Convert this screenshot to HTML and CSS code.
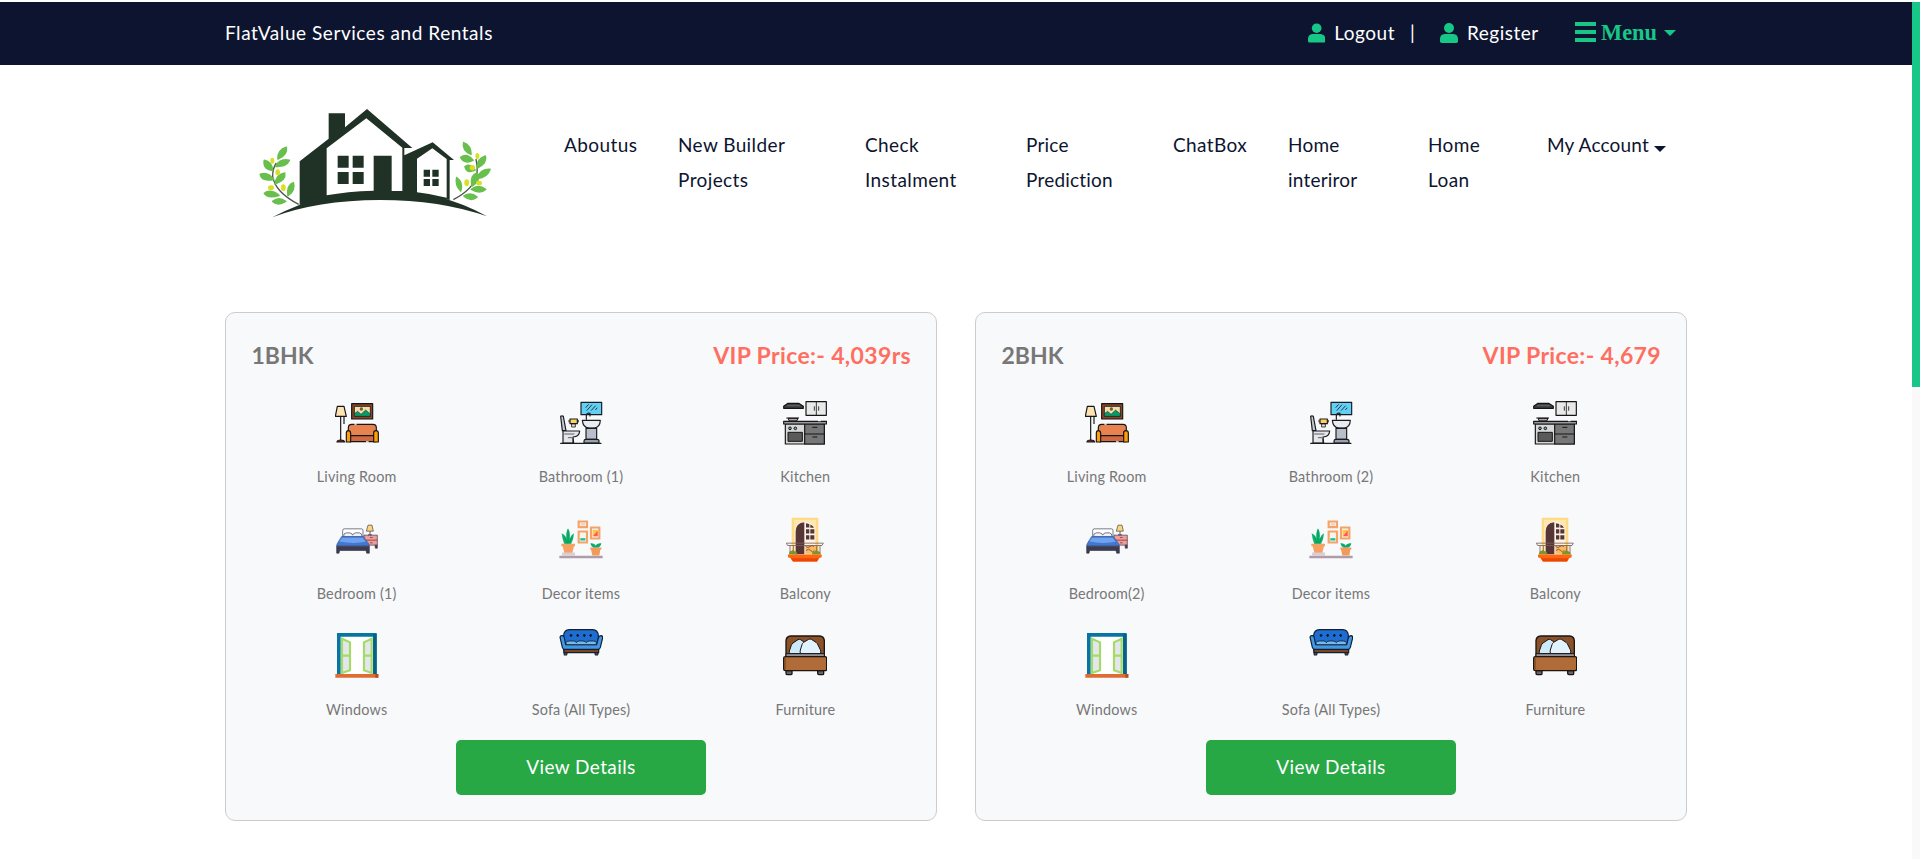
FILE: index.html
```html
<!DOCTYPE html>
<html lang="en">
<head>
<meta charset="utf-8">
<title>FlatValue Services and Rentals</title>
<link rel="stylesheet" href="styles.css">
</head>
<body>
<svg class="sprite" width="0" height="0" aria-hidden="true">
  <symbol id="user" viewBox="0 0 18 20">
    <circle cx="9" cy="5" r="5"/>
    <path d="M4.6 11h8.8Q18 11.500 18 16v2.200Q18 20 16.200 20H1.800Q0 20 0 18.200V16q0-4.500 4.600-5z"/>
  </symbol>

  <symbol id="living" viewBox="344 273 132 150">
    <g stroke="#161616" stroke-width="3.500" stroke-linejoin="round">
      <path d="M361 335v72M371 335v22" fill="none"/>
      <path d="M351 304h20l7 30h-33z" fill="#ffe3b3"/>
      <path d="M350 411q0-6 11-6t12 6z" fill="#8d2430"/>
      <path d="M394 296h63v46h-63z" fill="#8a4526"/>
      <path d="M402 304h48v30h-48z" fill="#f3dfaa" stroke-width="2.500"/>
      <path d="M402 334v-8l10-7 10 9 14-13 14 12v7z" fill="#079b6c" stroke-width="1.500"/>
      <circle cx="423" cy="312" r="5" fill="#6c6133" stroke="none"/>
      <path d="M384 382v-14q0-10 10-10h64q10 0 10 10v14l-4 10h-76z" fill="#e8824f"/>
      <path d="M388 392h78v18h-78z" fill="#cf6a41"/>
      <path d="M378 411v-27q0-7 6-7t7 7v27zM460 411v-27q0-7 7-7t7 7v27z" fill="#ff9e0b"/>
    </g>
    <path d="M402 357h7M437 411h8" stroke="#f8f9fb" stroke-width="4"/>
  </symbol>

  <symbol id="bathroom" viewBox="87 273 132 150">
    <g stroke="#1a1c20" stroke-width="3.500" stroke-linejoin="round" stroke-linecap="round">
      <path d="M153 292h62v37h-62z" fill="#62d0f4"/>
      <path d="M168 307l7-8M171 316l14-16M184 316l12-13M197 314l4-5" fill="none" stroke-width="2.500"/>
      <path d="M92 334q4-3 8 0l8 43H97z" fill="#c5c9d2"/>
      <path d="M99 378h50q-1 17-20 18l2 18h-32z" fill="#e3e6ea"/>
      <path d="M104 387h28" stroke-width="2" fill="none"/>
      <path d="M125 398h-10M128 401v13" stroke-width="2" fill="none"/>
      <path d="M120 342h22v14h-22z" fill="#ffd35a"/>
      <path d="M117 346v5M145 346v5M126 357h10v9h-10z" fill="#e8e8e8" stroke-width="2.500"/>
      <path d="M157 346h54q-1 22-18 23h-17q-17-1-19-23z" fill="#e8ebef"/>
      <path d="M168 370h32v33h-32z" fill="#b8beca"/>
      <path d="M162 414v-6q0-5 6-5h32q7 0 7 5v6z" fill="#9aa0ad"/>
      <path d="M169 343v-11q1-10 11-7v8" fill="none"/>
      <path d="M92 415h121" fill="none"/>
    </g>
  </symbol>

  <symbol id="kitchen" viewBox="761 273 132 150">
    <g stroke="#161616" stroke-width="3.500" stroke-linejoin="round">
      <path d="M776 295h32l14 9v6h-59v-6z" fill="#3f3f40"/>
      <path d="M773 302h39" fill="none" stroke="#777" stroke-width="2"/>
      <path d="M830 290h61v41h-61z" fill="#e9e9e9"/>
      <path d="M861 290v41M855 304v13M868 304v13" fill="none" stroke-width="2.500"/>
      <path d="M776 340h30l-4 8h-22zM771 339h38" fill="#aaa" stroke-width="3"/>
      <path d="M768 357h117v60H768z" fill="#d7d7d7"/>
      <path d="M826 357h59v60h-59z" fill="#777"/>
      <path d="M763 349h129v8H763z" fill="#9a9a9a"/>
      <path d="M826 387h59M849 367h15M849 396h15" fill="none" stroke-width="3"/>
      <path d="M776 382h43v27h-43z" fill="#5a5a5a" stroke-width="3"/>
      <circle cx="782" cy="370" r="4" fill="#6db2bd" stroke-width="3"/>
      <circle cx="798" cy="370" r="4" fill="#6db2bd" stroke-width="3"/>
    </g>
    <path d="M866 347h8" stroke="#f8f9fb" stroke-width="4"/>
  </symbol>

  <symbol id="bedroom" viewBox="104 37.500 132 150">
    <g stroke="#3c3b50" stroke-width="2" stroke-linejoin="round">
      <path d="M191 104h40v30h-40z" fill="#f59a94"/>
      <path d="M191 119h40M209 111h8M209 127h8" fill="none"/>
      <path d="M224 134h7v9h-6z" fill="#3c3b50"/>
      <path d="M209 92v11M203 103h12" fill="none" stroke-width="2.500"/>
      <path d="M203 74h12l4 18h-21z" fill="#ffd57b"/>
      <path d="M127 110V90q0-5 5-5h51q5 0 5 5v20z" fill="#fff"/>
      <path d="M130 109q-2-11 8-12h10q8 1 9 7 2-6 9-7h11q9 1 8 12z" fill="#eef1f7"/>
      <path d="M124 108h65l15 20q3 4 3 9H109q0-6 3-10z" fill="#4478d0" stroke="#3a5d9e"/>
      <path d="M109 137h98v21h-8l-2-8h-79l-2 8h-7z" fill="#3c3b50"/>
    </g>
    <path d="M125 112h62l9 12q-38 7-79-1z" fill="#70a3ef"/>
  </symbol>

  <symbol id="decor" viewBox="777 37.500 132 150">
    <g fill="#f7f4ee" stroke="#f4a468" stroke-width="6.500">
      <path d="M836 63h25v17h-25zM836 93h25v33h-25zM873 81h25v33h-25z"/>
    </g>
    <path d="M842 68h13v7h-13z" fill="#ecd3c6"/>
    <path d="M841 113h15v7h-15z" fill="#19c092"/>
    <path d="M878 88h15v19h-15z" fill="#ffc44b"/>
    <path d="M879 107l14-17v17z" fill="#ff594f"/>
    <path d="M778 166h130v7H778z" fill="#ae9ca9"/>
    <path d="M786 156h39v10h-39z" fill="#d8ced7"/>
    <path d="M785 98q14 8 14 17-2-20 5-32 8 14 5 31 4-12 13-16-1 18-9 33h-20q-6-14-8-33z" fill="#10b56d"/>
    <path d="M804 88v40M792 107l9 21M816 108l-8 20" fill="none" stroke="#078b55" stroke-width="2"/>
    <path d="M784 130h41v7h-3l-5 20h-24l-5-20h-4z" fill="#f6a263"/>
    <path d="M871 128q13-1 16 8 3-9 17-8-2 11-11 14h-12q-8-4-10-14z" fill="#08ad6b"/>
    <path d="M871 141h33v6h-3l-3 18h-21l-4-18h-2z" fill="#f29a5b"/>
  </symbol>

  <symbol id="balcony" viewBox="431 37.500 132 150">
    <path d="M457 52h80v109h-80z" fill="#ffd985"/>
    <path d="M464 58h66v98h-66z" fill="#ffe8ae"/>
    <path d="M468 161V93q0-29 28-30 28 1 31 30v68z" fill="#fff3e4"/>
    <path d="M469 161V94q0-27 26-29v96z" fill="#563538"/>
    <path d="M500 68q9 1 10 3v10h-10zM513 72q9 4 11 10h-11zM500 86h10v13h-10zM513 86h12v13h-12zM500 104h10v13h-10zM513 104h12v13h-12z" fill="#563538"/>
    <path d="M498 135h39v25h-39z" fill="#f7bc63"/>
    <path d="M499 138q7 6 13 0t12 0M500 150q8-8 14 0t11 0" fill="none" stroke="#915a3a" stroke-width="3"/>
    <path d="M441 128h111l-4 7H445zM452 135v22M542 135v22M462 135v22M532 135v22" fill="none" stroke="#7d5d58" stroke-width="2.500"/>
    <path d="M449 162q0-11 8-11 4-5 9 1 8 0 8 10zM518 162q0-10 8-10 5-6 10 0 8 0 9 10z" fill="#7d942c"/>
    <path d="M446 162h101v8l-8 3-6 10h-72l-7-10-8-3z" fill="#ff6610"/>
    <path d="M454 173h85l-6 10h-72z" fill="#eb4706"/>
  </symbol>

  <symbol id="windows" viewBox="104 387 132 150">
    <path d="M110 399h119v124H110z" fill="#0874a3"/>
    <path d="M121 410h97v113h-97z" fill="#fff"/>
    <path d="M219 402h10v120h-10z" fill="#086087"/>
    <g fill="#e5e6ed" stroke="#a3dc62" stroke-width="6.500">
      <path d="M125 416l24 11v84l-24 8zM214 416l-23 11v84l23 8z"/>
      <path d="M125 467h25M190 467h24" fill="none"/>
    </g>
    <path d="M105 522h129v11H105z" fill="#df6b36"/>
    <path d="M225 522h9v11h-9z" fill="#b74b24"/>
  </symbol>

  <symbol id="sofa" viewBox="777 387 132 150">
    <g stroke="#102037" stroke-width="3.500" stroke-linejoin="round">
      <path d="M791 448h12l-3 17h-7zM883 448h13l-3 17h-7z" fill="#8a5025"/>
      <path d="M792 446h104v12H792z" fill="#7b451e"/>
      <path d="M791 430v-24q1-16 17-17h70q16 1 17 17v24z" fill="#1d6ed0"/>
      <path d="M780 411q1-5 8-4 4 1 5 7l4 20h93l5-20q2-7 8-7 6 1 5 7l-7 28q-1 6-8 6h-98q-7 0-8-6z" fill="#4198e7"/>
      <path d="M798 434v-6q2-5 11-5h12q8 1 8 5 2-5 10-5h10q8 1 10 5 2-5 10-5h11q9 1 9 5v6z" fill="#78b9e9" stroke-width="2.500"/>
    </g>
    <path d="M813 402v9M833 402v9M853 402v9M872 402v9M809 406h8M829 406h8M849 406h8M868 406h8" stroke="#0a1830" stroke-width="4"/>
  </symbol>

  <symbol id="furniture" viewBox="431 387 132 150">
    <g stroke="#1c1512" stroke-width="4" stroke-linejoin="round">
      <path d="M440 512h18v9q0 3-4 3h-11q-3 0-3-4zM535 512h18v9q0 3-4 3h-10q-4 0-4-4z" fill="#686563"/>
      <path d="M440 468v-46q1-13 14-14h87q13 1 14 14v46z" fill="#8b5229"/>
      <g stroke-width="3">
        <path d="M451 461q-2-4-1-8l6-17q1-4 5-7l15-10q4-2 8 0l14 10v32z" fill="#cdeafa"/>
        <path d="M484 461q-3-5-1-11l5-16q1-4 5-7l15-9q4-2 8 0l14 9q4 3 6 8l7 14q3 7 0 12z" fill="#e0f3ff"/>
      </g>
      <path d="M440 461h115v9H440z" fill="#93939a" stroke-width="3"/>
      <path d="M433 475q0-5 5-5h119q5 0 5 5v32q0 5-5 5H438q-5 0-5-5z" fill="#b06c38"/>
    </g>
    <path d="M437 474v33" stroke="#855028" stroke-width="5"/>
  </symbol>
</svg>

<div class="page">
  <div class="content">
    <header class="topbar">
      <div class="wrap topbar-row">
        <span class="brand">FlatValue Services and Rentals</span>
        <div class="account">
          <a class="link"><svg class="user-icon"><use href="#user"/></svg>Logout</a>
          <span class="divider">|</span>
          <a class="link register"><svg class="user-icon"><use href="#user"/></svg>Register</a>
          <a class="menu"><span class="bars"><i></i><i></i><i></i></span>Menu<span class="caret"></span></a>
        </div>
      </div>
    </header>

    <div class="wrap mainnav">
      <svg class="logo" viewBox="0 0 810 420" role="img" aria-label="House logo">
        <g fill="#203126">
          <path d="M97 382Q250 300 425 300 600 300 741 379 600 330 420 330 230 331 97 382z"/>
          <path d="M179 345V214l87-68V70h49v42l66-55 136 117h-24v22l85-39 64 53h-13v120Q420 300 179 345z"/>
        </g>
        <path d="M260 175L379 85l108 88v130h-32V197h-54v105Q320 304 260 316z" fill="#fff"/>
        <path d="M531 206l46-31 43 32v116q-45-11-89-16z" fill="#fff"/>
        <path d="M293 197h33v36h-33zM338 197h33v36h-33zM293 246h33v36h-33zM338 246h33v36h-33zM551 239h19v21h-19zM577 239h19v21h-19zM551 267h19v21h-19zM577 267h19v21h-19z" fill="#203126"/>
        <path d="M176 343Q105 306 98 259 98 234 109 219M640 329Q700 298 711 254 714 232 708 207" fill="none" stroke="#4b554e" stroke-width="4"/>
        <g fill="#69bf4d" stroke="#69bf4d" stroke-width="5" stroke-linejoin="round">
          <path d="M114 207Q113 180 139 172 143 194 114 207zM107 229Q119 205 148 211 138 231 107 229zM98 241Q68 237 73 211 95 215 98 241zM101 268Q65 275 61 253 83 244 101 268zM105 282Q110 252 134 249 138 271 105 282zM117 316Q83 326 73 310 91 296 117 316zM144 317Q140 285 160 278 167 301 144 317zM137 334Q114 349 98 334 117 319 137 334z"/>
          <path d="M693 193Q666 181 671 158 693 166 693 193zM699 211Q673 223 662 202 681 189 699 211zM712 234Q710 206 736 198 742 219 712 234zM705 240Q680 252 675 230 692 219 705 240zM713 265Q719 237 750 238 741 262 713 265zM696 288Q690 255 711 249 724 271 696 288zM694 298Q715 281 737 298 720 313 694 298zM662 303Q645 285 650 263 670 277 662 303zM672 318Q693 305 711 321 693 336 672 318z"/>
        </g>
        <g fill="#d9df22">
          <ellipse cx="97" cy="212" rx="6" ry="9"/><ellipse cx="113" cy="247" rx="7" ry="9"/><ellipse cx="93" cy="293" rx="9" ry="7"/><ellipse cx="130" cy="293" rx="7" ry="10"/>
          <ellipse cx="712" cy="198" rx="6" ry="9"/><ellipse cx="697" cy="233" rx="8" ry="8"/><ellipse cx="680" cy="278" rx="7" ry="10"/><ellipse cx="717" cy="279" rx="9" ry="7"/>
        </g>
      </svg>
      <nav class="nav">
        <a class="w-about">Aboutus</a>
        <a class="w-builder">New Builder<br>Projects</a>
        <a class="w-check">Check<br>Instalment</a>
        <a class="w-price">Price<br>Prediction</a>
        <a class="w-chat">ChatBox</a>
        <a class="w-interior">Home<br>interiror</a>
        <a class="w-loan">Home<br>Loan</a>
        <a class="w-account">My Account<span class="caret"></span></a>
      </nav>
    </div>

    <main class="wrap cards">
      <section class="card">
        <div class="card-head"><h2>1BHK</h2><span class="price">VIP Price:- 4,039rs</span></div>
        <div class="rooms">
          <div class="room"><svg><use href="#living"/></svg><span>Living Room</span></div>
          <div class="room"><svg><use href="#bathroom"/></svg><span>Bathroom (1)</span></div>
          <div class="room"><svg><use href="#kitchen"/></svg><span>Kitchen</span></div>
          <div class="room"><svg><use href="#bedroom"/></svg><span>Bedroom (1)</span></div>
          <div class="room"><svg><use href="#decor"/></svg><span>Decor items</span></div>
          <div class="room"><svg><use href="#balcony"/></svg><span>Balcony</span></div>
          <div class="room"><svg><use href="#windows"/></svg><span>Windows</span></div>
          <div class="room"><svg><use href="#sofa"/></svg><span>Sofa (All Types)</span></div>
          <div class="room"><svg><use href="#furniture"/></svg><span>Furniture</span></div>
        </div>
        <a class="button">View Details</a>
      </section>
      <section class="card">
        <div class="card-head"><h2>2BHK</h2><span class="price">VIP Price:- 4,679</span></div>
        <div class="rooms">
          <div class="room"><svg><use href="#living"/></svg><span>Living Room</span></div>
          <div class="room"><svg><use href="#bathroom"/></svg><span>Bathroom (2)</span></div>
          <div class="room"><svg><use href="#kitchen"/></svg><span>Kitchen</span></div>
          <div class="room"><svg><use href="#bedroom"/></svg><span>Bedroom(2)</span></div>
          <div class="room"><svg><use href="#decor"/></svg><span>Decor items</span></div>
          <div class="room"><svg><use href="#balcony"/></svg><span>Balcony</span></div>
          <div class="room"><svg><use href="#windows"/></svg><span>Windows</span></div>
          <div class="room"><svg><use href="#sofa"/></svg><span>Sofa (All Types)</span></div>
          <div class="room"><svg><use href="#furniture"/></svg><span>Furniture</span></div>
        </div>
        <a class="button">View Details</a>
      </section>
    </main>
  </div>
  <div class="scrollbar"><div class="thumb"></div></div>
</div>
</body>
</html>
```
FILE: styles.css
```css
* { box-sizing: border-box; }
body { margin: 0; background: #fff; color: #0d1430; font: 19px/35px Lato, "Open Sans", sans-serif; overflow: hidden; }
.sprite { display: block; }
.page { display: flex; height: 859px; padding-top: 2px; }
.content { flex: 1; }
.wrap { width: 1462px; margin: 0 auto; }

.topbar { height: 63px; background: #0d1430; color: #fff; }
.topbar-row { display: flex; justify-content: space-between; align-items: center; height: 61px; }
.brand { letter-spacing: 0.55px; }
.account { display: flex; align-items: center; width: 379px; letter-spacing: 0.5px; }
.link { display: flex; align-items: center; width: 87px; white-space: nowrap; }
.user-icon { width: 18px; height: 20px; margin-right: 9px; fill: #17c788; }
.divider { width: 45px; padding-left: 15px; }
.register { width: 135px; }
.menu { display: flex; align-items: center; color: #17c788; font: bold 22.4px/35px "Liberation Serif", serif; letter-spacing: 0; }
.bars { display: flex; flex-direction: column; gap: 4px; width: 21px; margin: 0 5px 1px 0; }
.bars i { height: 4px; background: #17c788; }
.caret { display: inline-block; border: 6px solid transparent; border-top-color: currentColor; border-bottom: 0; }
.menu .caret { margin-left: 7px; }

.mainnav { display: flex; height: 247px; padding: 25px 0 0 15px; }
.logo { width: 270px; height: 140px; flex: none; }
.nav { display: flex; margin-left: 54px; padding-top: 37px; letter-spacing: 0.4px; white-space: nowrap; }
.w-about { width: 114px; }
.w-builder { width: 187px; }
.w-check { width: 161px; }
.w-price { width: 147px; letter-spacing: 0.2px; }
.w-chat { width: 115px; }
.w-interior { width: 140px; letter-spacing: 0.2px; }
.w-loan { width: 119px; }
.nav .w-account { letter-spacing: 0.2px; }
.nav .caret { margin-left: 5px; }

.cards { display: flex; justify-content: space-between; }
.card { width: 712px; height: 509px; padding: 24px 18.500px; border: 1px solid #ccc; border-radius: 10px; background: #f8f9fb; }
.card-head { display: flex; justify-content: space-between; margin-bottom: 23px; padding: 0 6.500px 0 7px; font-size: 23px; line-height: 36px; font-weight: 700; }
.card-head h2 { margin: 0; color: #777; font: inherit; }
.price { color: #ff6f61; letter-spacing: 0.35px; }
.rooms { display: grid; grid-template-columns: repeat(3, 1fr); row-gap: 22.500px; }
.room { display: flex; flex-direction: column; align-items: center; height: 94px; color: #777; font-size: 14.400px; line-height: 26px; letter-spacing: 0.2px; }
.room svg { width: 44px; height: 50px; margin-bottom: 18px; }
.button { display: block; width: 250px; height: 55px; margin: 17px auto 0; border-radius: 5px; background: #28a745; color: #fff; line-height: 54px; text-align: center; letter-spacing: 0.4px; }

.scrollbar { width: 8px; background: #f9f9f9; }
.thumb { height: 385px; background: #17c788; }
```
